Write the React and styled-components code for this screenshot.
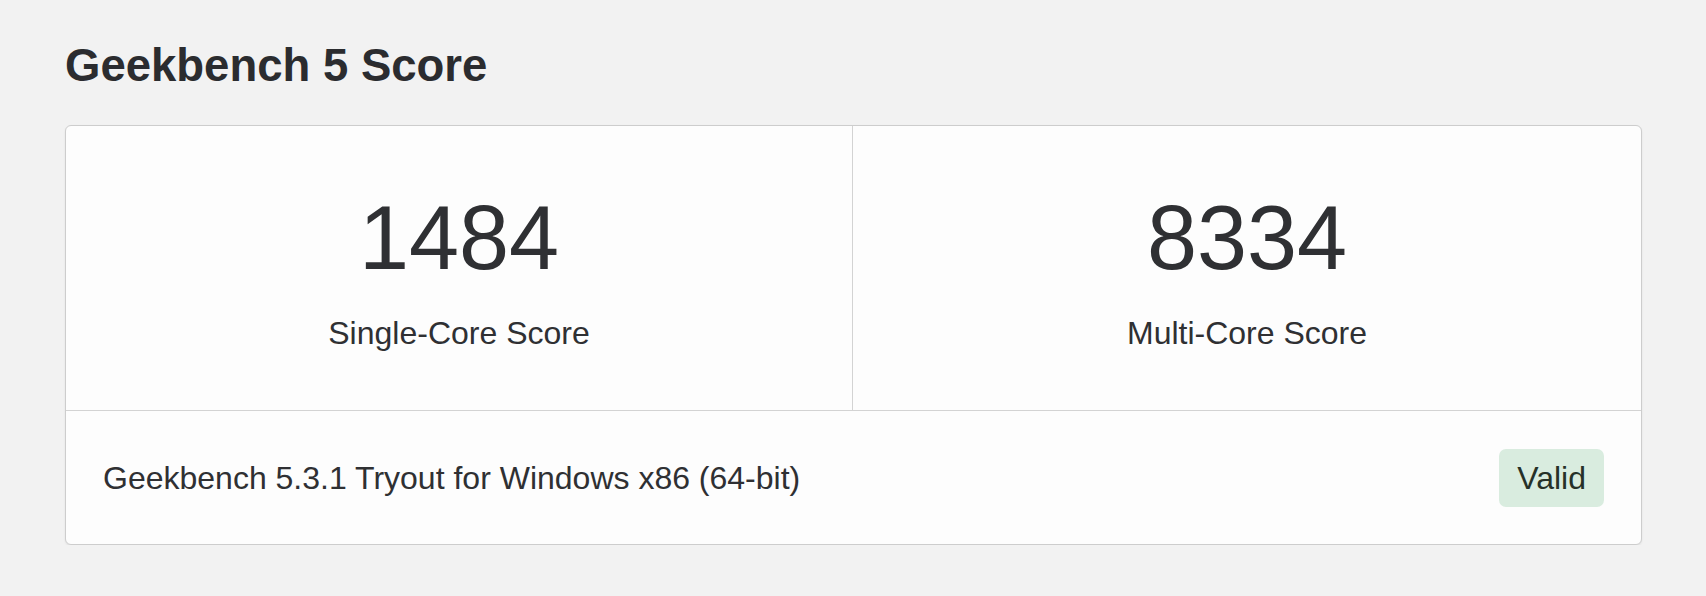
import React from "react";
import styled, { createGlobalStyle } from "styled-components";

const GlobalStyle = createGlobalStyle`
    body {
        margin: 0;
        background: #f2f2f2;
        font-family: "Liberation Sans", Arial, Helvetica, sans-serif;
        color: #2f3033;
    }
`;

const scores = [
    { value: 1484, label: "Single-Core Score" },
    { value: 8334, label: "Multi-Core Score" },
];

const App = () => {
    return (
        <>
            <GlobalStyle />
            <Page>
                <Title>Geekbench 5 Score</Title>
                <Card>
                    <ScoreRow>
                        {scores.map((s, i) => (
                            <ScoreCell key={s.label} $divided={i > 0}>
                                <ScoreValue>{s.value}</ScoreValue>
                                <ScoreLabel>{s.label}</ScoreLabel>
                            </ScoreCell>
                        ))}
                    </ScoreRow>
                    <Footer>
                        <Version>Geekbench 5.3.1 Tryout for Windows x86 (64-bit)</Version>
                        <Badge>Valid</Badge>
                    </Footer>
                </Card>
            </Page>
        </>
    );
};

const Page = styled.div`
    padding: 38px 64px 0 65px;
`;

const Title = styled.h2`
    margin: 0 0 32px;
    font-size: 45.5px;
    line-height: 55px;
    font-weight: 700;
    color: #2b2c2f;
`;

const Card = styled.div`
    background: #fdfdfd;
    border: 1px solid #cdcdcd;
    border-radius: 6px;
    box-shadow: 0 1px 2px rgba(0, 0, 0, 0.08);
    overflow: hidden;
`;

const ScoreRow = styled.div`
    display: grid;
    grid-template-columns: 786px 1fr;
    border-bottom: 1px solid #d3d3d3;
`;

const ScoreCell = styled.div`
    display: flex;
    flex-direction: column;
    align-items: center;
    padding: 57px 0 53px;
    border-left: ${(p) => (p.$divided ? "1px solid #d3d3d3" : "none")};
`;

const ScoreValue = styled.div`
    font-size: 90px;
    line-height: 110px;
    color: #2f3033;
    margin-bottom: 16px;
`;

const ScoreLabel = styled.div`
    font-size: 32px;
    line-height: 48px;
    color: #2f3033;
`;

const Footer = styled.div`
    display: flex;
    align-items: center;
    justify-content: space-between;
    padding: 38px 37px 37px 37px;
`;

const Version = styled.div`
    font-size: 32px;
    line-height: 48px;
    color: #2f3033;
`;

const Badge = styled.span`
    background: #d9ecdf;
    color: #263128;
    font-size: 32px;
    line-height: 38px;
    padding: 10px 18px;
    border-radius: 7px;
`;

export default App;
